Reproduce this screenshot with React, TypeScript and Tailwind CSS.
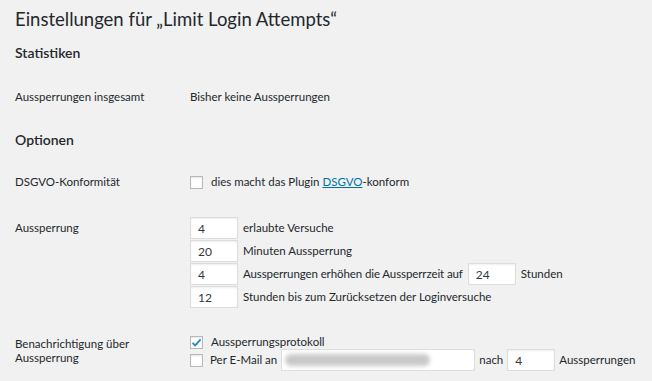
const inputCls =
  "h-[22px] w-[48px] border border-[#dddddd] bg-white px-[7px] text-[12px] text-[#32373c] shadow-[inset_0_1px_2px_rgba(0,0,0,0.07)] outline-none";

function Box({ checked = false }: { checked?: boolean }) {
  return (
    <span className="flex h-[13px] w-[13px] shrink-0 items-center justify-center border border-[#b4b9be] bg-white shadow-[inset_0_1px_2px_rgba(0,0,0,0.1)]">
      {checked ? (
        <svg width="11" height="11" viewBox="0 0 11 11">
          <path d="M1.5 5.8 L4.2 8.4 L9.6 2.4" fill="none" stroke="#1e8cbe" strokeWidth="1.8" />
        </svg>
      ) : null}
    </span>
  );
}

function NumRow({ value, children }: { value: string; children: React.ReactNode }) {
  return (
    <div className="flex h-[22px] items-center gap-[5px] whitespace-nowrap">
      <input className={inputCls} defaultValue={value} />
      {children}
    </div>
  );
}

export default function App() {
  return (
    <div
      className="h-[381px] overflow-hidden bg-[#f1f1f1] px-[15px] text-[11.5px] text-[#23282d]"
      style={{ fontFamily: 'Lato, "Open Sans", sans-serif' }}
    >
      <h1 className="pt-[6px] text-[18.5px] leading-[26px] font-normal text-[#23282d]">
        Einstellungen für „Limit Login Attempts“
      </h1>

      <h2 className="mt-[12px] text-[14px] leading-[18px] font-semibold">Statistiken</h2>
      <div className="mt-[27px] flex leading-[16px]">
        <div className="w-[175px] shrink-0">Aussperrungen insgesamt</div>
        <div>Bisher keine Aussperrungen</div>
      </div>

      <h2 className="mt-[26px] text-[14px] leading-[18px] font-semibold">Optionen</h2>
      <div className="mt-[25px] flex items-center leading-[16px]">
        <div className="w-[175px] shrink-0">DSGVO-Konformität</div>
        <label className="flex items-center gap-[8px]">
          <Box />
          <span>
            dies macht das Plugin{" "}
            <a href="#" className="text-[#0073aa] underline">
              DSGVO
            </a>
            -konform
          </span>
        </label>
      </div>

      <div className="mt-[27px] flex">
        <div className="w-[175px] shrink-0 pt-[3px] leading-[16px]">Aussperrung</div>
        <div className="flex flex-col gap-[1px]">
          <NumRow value="4">
            <span>erlaubte Versuche</span>
          </NumRow>
          <NumRow value="20">
            <span>Minuten Aussperrung</span>
          </NumRow>
          <NumRow value="4">
            <span className="tracking-[-0.1px]">Aussperrungen erhöhen die Aussperrzeit auf</span>
            <input className={inputCls} defaultValue="24" />
            <span>Stunden</span>
          </NumRow>
          <NumRow value="12">
            <span>Stunden bis zum Zurücksetzen der Loginversuche</span>
          </NumRow>
        </div>
      </div>

      <div className="mt-[27px] flex">
        <div className="w-[175px] shrink-0 pt-[2px] leading-[14px]">
          Benachrichtigung über
          <br />
          Aussperrung
        </div>
        <div className="flex flex-col">
          <label className="flex h-[14px] items-center gap-[8px] whitespace-nowrap">
            <Box checked />
            <span>Aussperrungsprotokoll</span>
          </label>
          <div className="flex h-[22px] items-center gap-[4px] whitespace-nowrap">
            <label className="flex items-center gap-[7px]">
              <Box />
              <span>Per E-Mail an</span>
            </label>
            <div className="flex h-[22px] w-[194px] shrink-0 items-center border border-[#dddddd] bg-white px-[3px]">
              <span className="h-[12px] w-[145px] rounded-full bg-[#c9c9c9] blur-[2px]" />
            </div>
            <span>nach</span>
            <input className={inputCls} defaultValue="4" />
            <span>Aussperrungen</span>
          </div>
        </div>
      </div>
    </div>
  );
}
